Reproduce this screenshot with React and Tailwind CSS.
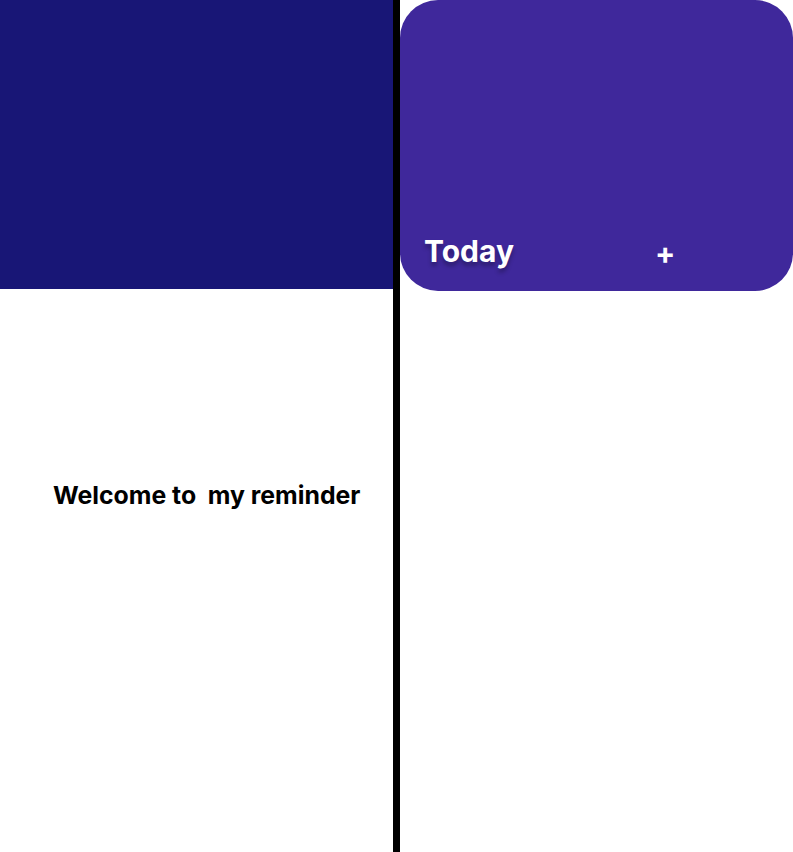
const App = () => {
    return (
        <div className="flex h-[852px] w-[793px] bg-white font-['Inter',sans-serif]">
            <div className="flex w-[393px] flex-col">
                <div className="h-[289px] bg-[#181676]"></div>
                <div className="pl-[53px] pt-[191px]">
                    <h2 className="whitespace-pre text-[24.8px] font-bold leading-[30px] text-black">Welcome to  my reminder</h2>
                </div>
            </div>
            <div className="w-[7px] bg-black"></div>
            <div className="flex-1">
                <div className="flex h-[291px] items-end rounded-[38px] bg-[#3f289b] pb-[22px] pl-[24px]">
                    <h1 className="text-[30px] font-bold leading-[36px] text-white [text-shadow:0_4px_4px_rgba(0,0,0,0.3)]">Today</h1>
                    <button className="ml-[141px] mb-[1px] text-[30px] font-bold leading-[30px] text-white">+</button>
                </div>
            </div>
        </div>
    )
}

export { App as default };
